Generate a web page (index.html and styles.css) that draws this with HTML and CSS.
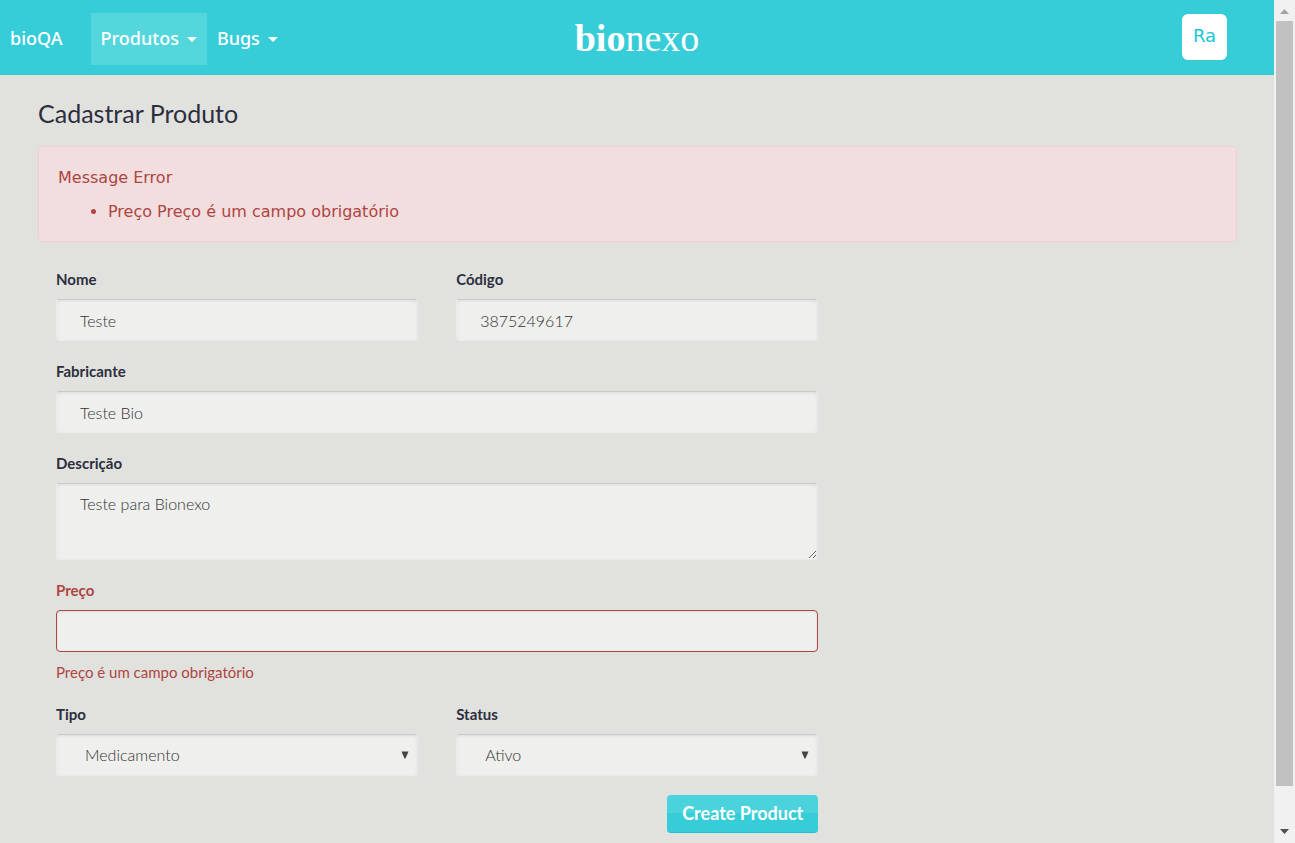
FILE: index.html
```
<!DOCTYPE html>
<html lang="pt-BR">
<head>
  <meta charset="utf-8">
  <meta name="viewport" content="width=device-width, initial-scale=1">
  <title>Cadastrar Produto</title>
  <link rel="stylesheet" href="styles.css">
</head>
<body>
  <div class="page">
    <header class="navbar">
      <nav class="menu">
        <a class="brand" href="#">bioQA</a>
        <a class="menu-item active" href="#">Produtos <span class="caret"></span></a>
        <a class="menu-item" href="#">Bugs <span class="caret"></span></a>
      </nav>
      <a class="logo" href="#"><b>bio</b>nexo</a>
      <div class="account"><button class="avatar" type="button">Ra</button></div>
    </header>

    <main class="content">
      <h1 class="title">Cadastrar Produto</h1>

      <div class="alert" role="alert">
        <p class="alert-title">Message Error</p>
        <ul class="alert-list">
          <li>Preço Preço é um campo obrigatório</li>
        </ul>
      </div>

      <form class="form">
        <div class="field">
          <label for="nome">Nome</label>
          <input class="control" id="nome" type="text" value="Teste">
        </div>
        <div class="field">
          <label for="codigo">Código</label>
          <input class="control" id="codigo" type="text" value="3875249617">
        </div>
        <div class="field wide">
          <label for="fabricante">Fabricante</label>
          <input class="control" id="fabricante" type="text" value="Teste Bio">
        </div>
        <div class="field wide">
          <label for="descricao">Descrição</label>
          <textarea class="control area" id="descricao">Teste para Bionexo</textarea>
        </div>
        <div class="field wide has-error">
          <label for="preco">Preço</label>
          <input class="control" id="preco" type="text" aria-describedby="preco-erro">
          <span class="help" id="preco-erro">Preço é um campo obrigatório</span>
        </div>
        <div class="field">
          <label for="tipo">Tipo</label>
          <div class="select">
            <select class="control" id="tipo"><option>Medicamento</option></select>
            <svg class="arrow" width="8" height="8" viewBox="0 0 8 8" aria-hidden="true"><path d="M0.5 0.5h7L4.5 7.5H3.5z" fill="#444"/></svg>
          </div>
        </div>
        <div class="field">
          <label for="status">Status</label>
          <div class="select">
            <select class="control" id="status"><option>Ativo</option></select>
            <svg class="arrow" width="8" height="8" viewBox="0 0 8 8" aria-hidden="true"><path d="M0.5 0.5h7L4.5 7.5H3.5z" fill="#444"/></svg>
          </div>
        </div>
        <div class="actions">
          <button class="submit" type="submit">Create Product</button>
        </div>
      </form>
    </main>
  </div>

  <div class="scrollbar" aria-hidden="true">
    <svg width="9" height="5" viewBox="0 0 9 5"><path d="M0 5L4.5 0 9 5z" fill="#a3a3a3"/></svg>
    <div class="thumb"></div>
    <svg width="9" height="5" viewBox="0 0 9 5"><path d="M0 0L4.5 5 9 0z" fill="#505050"/></svg>
  </div>
</body>
</html>
```
FILE: styles.css
```
* { box-sizing: border-box; }

body {
  display: flex;
  height: 100vh;
  margin: 0;
  overflow: hidden;
  background: #e1e1dd;
  color: #2c2f3e;
  font-family: Lato, sans-serif;
  font-size: 15px;
}

.page { flex: 1; min-width: 0; }

/* Navigation */
.navbar {
  display: grid;
  grid-template-columns: 1fr auto 1fr;
  align-items: center;
  height: 75px;
  background: #36cdd9;
  font-family: "Noto Sans", sans-serif;
}

.navbar a { color: #fff; text-decoration: none; }

.menu {
  display: flex;
  align-items: center;
  padding: 2px 0 0 10px;
  font-size: 18px;
  font-weight: 500;
}

.brand { margin-right: 28px; padding-bottom: 2px; }

.menu-item {
  display: flex;
  align-items: center;
  gap: 8px;
  height: 52px;
  padding: 0 10px 2px;
}

.active { background: #53d7dc; }

.caret {
  margin-top: 4px;
  border: 5px solid transparent;
  border-top-color: #fff;
  border-bottom: 0;
}

.logo {
  font-family: "Liberation Serif", serif;
  font-size: 38px;
  line-height: 44px;
}

.account {
  display: flex;
  justify-content: flex-end;
  padding: 0 47px 2px 0;
}

.avatar {
  width: 45px;
  height: 46px;
  padding: 0 0 2px;
  border: 0;
  border-radius: 6px;
  background: #fff;
  color: #18c8d6;
  font: 18px "DejaVu Sans", sans-serif;
}

/* Content */
.content { padding: 23px 37px 10px 38px; }

.title {
  margin: 0 0 18px;
  font-size: 25px;
  font-weight: 400;
  line-height: 30px;
}

.alert {
  padding: 19px 19px 17px;
  border: 1px solid #eed0d5;
  border-radius: 4px;
  background: #f2dede;
  color: #ae4543;
  font: 16px/24px "DejaVu Sans", sans-serif;
}

.alert-title { margin: 0 0 10px; }
.alert-list { margin: 0; padding-left: 50px; }

.form {
  display: grid;
  grid-template-columns: 1fr 1fr;
  column-gap: 38px;
  row-gap: 20px;
  width: calc(200% / 3);
  margin-top: 27px;
  padding: 0 19px 0 18px;
}

.field {
  display: flex;
  flex-direction: column;
  gap: 10px;
}

.wide, .actions { grid-column: 1 / -1; }

label { font-weight: 700; line-height: 20px; }

.control {
  display: block;
  width: 100%;
  height: 42px;
  margin: 0;
  padding: 0 23px;
  border: 1px solid #ebebea;
  border-top-color: #c9c9c8;
  border-radius: 4px;
  outline: 0;
  background: #efefed;
  box-shadow: inset 0 1px 3px rgba(0, 0, 0, 0.08);
  color: #333;
  font: 300 16px/20px Lato, sans-serif;
}

.area { height: 77px; padding-top: 10px; resize: vertical; }

.has-error { color: #ae4543; }
.has-error .control { border-color: #ae4543; }
.help { line-height: 20px; }

.select { position: relative; }
.select .control { appearance: none; padding-left: 28px; }
.arrow { position: absolute; top: 17px; right: 9px; pointer-events: none; }

.has-error { padding-bottom: 2px; }

.actions { display: flex; justify-content: flex-end; margin-top: -1px; }

.submit {
  height: 38px;
  padding: 0 15px 2px;
  border: 0;
  border-bottom: 1px solid #18c2cf;
  border-radius: 4px;
  background: linear-gradient(#4bd3dd 50%, #36cdd9 50%);
  color: #fff;
  font: 700 18px Lato, sans-serif;
}

/* Scroll track */
.scrollbar {
  display: flex;
  flex-direction: column;
  align-items: center;
  width: 21px;
  padding: 9px 0;
  background: #f1f1f1;
}

.thumb {
  flex: 1;
  width: 17px;
  margin: 7px 0 43px;
  background: #c1c1c1;
}
```
